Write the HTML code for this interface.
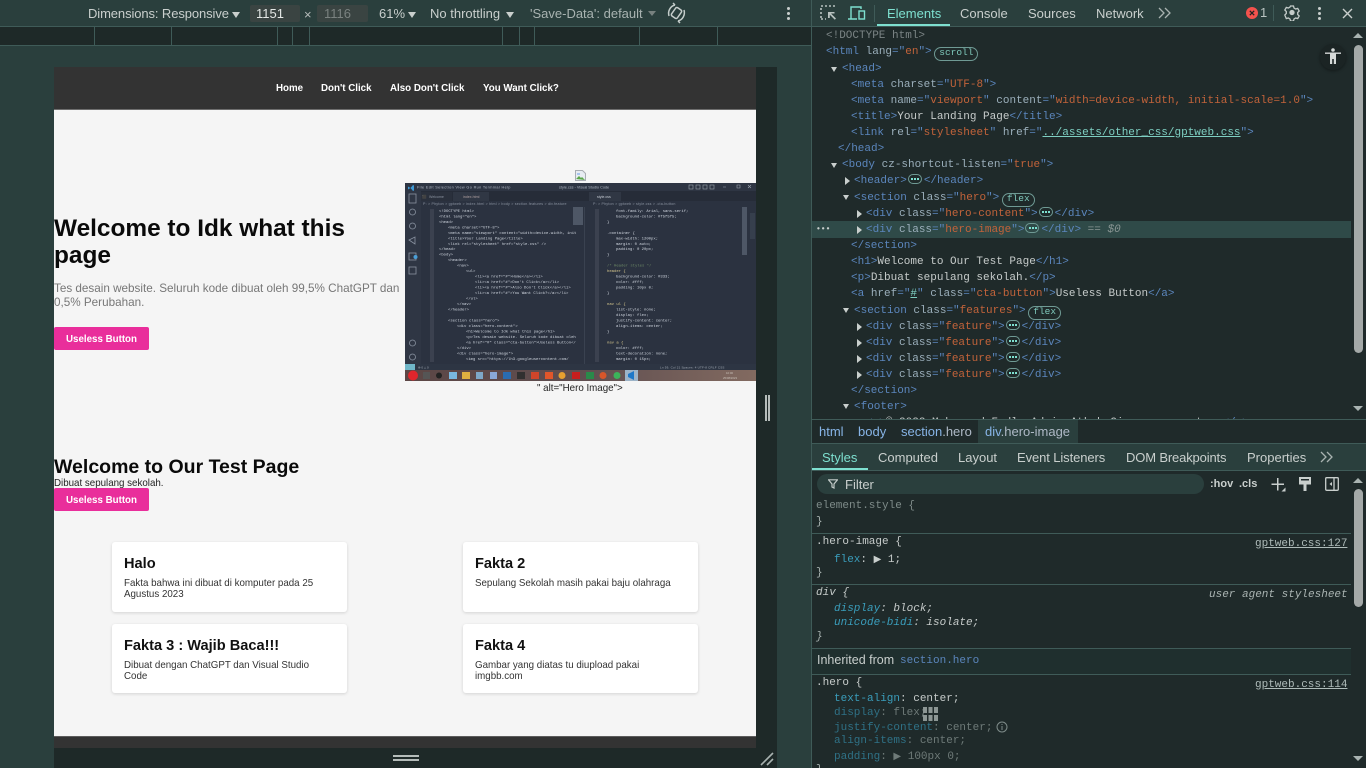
<!DOCTYPE html>
<html lang="en"><head><meta charset="utf-8"><title>DevTools</title>
<style>
*{box-sizing:border-box}
html,body{margin:0;padding:0;width:1366px;height:768px;overflow:hidden;background:#2a3f3d}
body{position:relative}
.a{position:absolute}
.t{position:absolute;white-space:pre;font-family:"Liberation Sans",sans-serif;font-size:13px;line-height:16px;color:#c9cfcd}
.m{position:absolute;white-space:pre;font-family:"Liberation Mono",monospace;font-size:11px;line-height:16px;color:#c6cbca;margin-top:1px}
.m i{font-style:normal}
.g{color:#5b86bd}.n{color:#9bafbb}.v{color:#c2633a}.p{color:#3a9dbb}.u{text-decoration:underline;color:#aebbb9}
.ell{display:inline-block;width:14px;height:10px;border:1px solid #6f9a94;border-radius:5px;vertical-align:-1px;position:relative;margin:0 2px 0 1px}
.ell:after{content:"";position:absolute;left:2.500px;top:3px;width:8px;height:2px;background:repeating-linear-gradient(90deg,#7ee0d0 0 2px,transparent 2px 3px)}
.badge{display:inline-block;border:1px solid #6f9a94;border-radius:8px;height:14px;line-height:10px;font-size:9.500px;color:#7ec8bb;padding:0 4px;vertical-align:-1px;margin-left:-4px;font-family:"Liberation Mono",monospace}
.tr{position:absolute;width:0;height:0;border-left:3.500px solid transparent;border-right:3.500px solid transparent;border-top:5px solid #c9cfcd}
#dom .tr{margin-top:-1px}
.tl{position:absolute;width:0;height:0;border-top:4px solid transparent;border-bottom:4px solid transparent;border-left:5px solid #c9cfcd}
.tick{position:absolute;top:27px;height:18px;width:1px;background:#3f5b58}
.hr{position:absolute;left:812px;width:539px;height:1px;background:#3f5b58}
.card{position:absolute;width:235px;background:#fff;border-radius:3px;box-shadow:0 1px 3px rgba(0,0,0,.14)}
.card b{position:absolute;left:12px;top:13px;font:bold 14.600px/18px "Liberation Sans",sans-serif;color:#111;white-space:pre}
.card span{position:absolute;left:12px;top:36px;width:205px;font:9.760px/11px "Liberation Sans",sans-serif;color:#333}
.btn{position:absolute;left:54px;width:95px;height:23px;background:#e92e9b;border-radius:2px;color:#fff;font:bold 9.760px/25px "Liberation Sans",sans-serif;text-align:center}
</style></head><body>

<!-- left toolbar -->
<div class="a" style="left:0;top:26px;width:811px;height:1px;background:#3f5b58"></div>
<div class="t" style="left:88px;top:6px;letter-spacing:-.1px">Dimensions: Responsive</div>
<div class="tr" style="left:232px;top:12px;border-left-width:4px;border-right-width:4px;border-top-width:6px"></div>
<div class="a" style="left:250px;top:5px;width:50px;height:17px;background:#3a4442;border-radius:2px"></div>
<div class="t" style="left:256px;top:6px;color:#e4e8e6">1151</div>
<div class="t" style="left:304px;top:7px;color:#b5bcba">×</div>
<div class="a" style="left:317px;top:5px;width:51px;height:17px;background:#3a4442;border-radius:2px"></div>
<div class="t" style="left:324px;top:6px;color:#7a8280">1116</div>
<div class="t" style="left:379px;top:6px">61%</div>
<div class="tr" style="left:408px;top:12px;border-left-width:4px;border-right-width:4px;border-top-width:6px"></div>
<div class="t" style="left:430px;top:6px">No throttling</div>
<div class="tr" style="left:506px;top:12px;border-left-width:4px;border-right-width:4px;border-top-width:6px"></div>
<div class="t" style="left:530px;top:6px;color:#a9b3b1">'Save-Data': default</div>
<div class="tr" style="left:648px;top:11px;border-left-width:4px;border-right-width:4px;border-top-width:5px;border-top-color:#77817f"></div>
<svg class="a" style="left:666px;top:2px" width="21" height="22" viewBox="0 0 21 22" fill="none" stroke="#c5cdcb" stroke-width="1.500"><rect x="7" y="6" width="7" height="10" rx="1.500" transform="rotate(35 10.500 11)"/><path d="M3 14C1.500 9 4.500 4 9 3M9 3L7 1M18 8c1.500 5-1.500 10-6 11M12 19l2 2"/></svg>
<svg class="a" style="left:786px;top:6px" width="5" height="15" fill="#c9cfcd"><circle cx="2.500" cy="2.500" r="1.500"/><circle cx="2.500" cy="7.500" r="1.500"/><circle cx="2.500" cy="12.500" r="1.500"/></svg>

<!-- ruler -->
<div class="a" style="left:0;top:27px;width:811px;height:19px;background:#1e2928;border-bottom:1px solid #3f5b58"></div>
<div class="tick" style="left:94px"></div><div class="tick" style="left:171px"></div><div class="tick" style="left:277px"></div><div class="tick" style="left:292px"></div><div class="tick" style="left:309px"></div><div class="tick" style="left:502px"></div><div class="tick" style="left:519px"></div><div class="tick" style="left:534px"></div><div class="tick" style="left:639px"></div><div class="tick" style="left:717px"></div>

<!-- device frame -->
<div class="a" style="left:756px;top:67px;width:21px;height:701px;background:#1e2928"></div>
<div class="a" style="left:54px;top:748px;width:723px;height:20px;background:#1e2928"></div>
<div class="a" style="left:393px;top:755px;width:26px;height:2px;background:#b5bcba"></div>
<div class="a" style="left:393px;top:759px;width:26px;height:2px;background:#b5bcba"></div>
<svg class="a" style="left:760px;top:752px" width="15" height="14" stroke="#a9b3b1" stroke-width="1.600"><path d="M1 13L13 1M7 13L13 7"/></svg>
<div class="a" style="left:765px;top:395px;width:2px;height:26px;background:#b5bcba"></div>
<div class="a" style="left:768px;top:395px;width:2px;height:26px;background:#b5bcba"></div>

<!-- page -->
<div class="a" style="left:54px;top:67px;width:702px;height:681px;background:#f5f5f5"></div>
<div class="a" style="left:54px;top:67px;width:702px;height:43px;background:#333;border-bottom:1px solid #6e6e6e"></div>
<div class="t" style="left:276px;top:81px;font-size:9.760px;font-weight:bold;color:#fff">Home</div>
<div class="t" style="left:321px;top:81px;font-size:9.760px;font-weight:bold;color:#fff">Don't Click</div>
<div class="t" style="left:390px;top:81px;font-size:9.760px;font-weight:bold;color:#fff">Also Don't Click</div>
<div class="t" style="left:483px;top:81px;font-size:9.760px;font-weight:bold;color:#fff">You Want Click?</div>

<div class="t" style="left:54px;top:215px;font-size:24.400px;line-height:27px;font-weight:bold;color:#0a0a0a">Welcome to Idk what this
page</div>
<div class="t" style="left:54px;top:282px;font-size:11.700px;line-height:14px;color:#777">Tes desain website. Seluruh kode dibuat oleh 99,5% ChatGPT dan
0,5% Perubahan.</div>
<div class="btn" style="top:327px">Useless Button</div>

<div class="t" style="left:54px;top:455px;font-size:19.500px;line-height:24px;font-weight:bold;color:#0a0a0a">Welcome to Our Test Page</div>
<div class="t" style="left:54px;top:476px;font-size:9.760px;line-height:16px;color:#222">Dibuat sepulang sekolah.</div>
<div class="btn" style="top:488px">Useless Button</div>

<div class="card" style="left:112px;top:542px;height:70px"><b>Halo</b><span>Fakta bahwa ini dibuat di komputer pada 25 Agustus 2023</span></div>
<div class="card" style="left:463px;top:542px;height:70px"><b>Fakta 2</b><span>Sepulang Sekolah masih pakai baju olahraga</span></div>
<div class="card" style="left:112px;top:624px;height:69px"><b>Fakta 3 : Wajib Baca!!!</b><span>Dibuat dengan ChatGPT dan Visual Studio Code</span></div>
<div class="card" style="left:463px;top:624px;height:69px"><b>Fakta 4</b><span>Gambar yang diatas tu diupload pakai imgbb.com</span></div>

<div class="a" style="left:54px;top:736px;width:702px;height:12px;background:#333;border-top:1px solid #5c5c5c"></div>

<!-- broken image icon -->
<svg class="a" style="left:575px;top:170px" width="11" height="11"><path d="M.5.500h7l3 3v7H.500z" fill="#e8ecf2" stroke="#a9adb3"/><path d="M1 9l3-3 2 2 1-1 3 3z" fill="#5aa64a"/><path d="M2 3h3v2H2z" fill="#a8c4ee"/></svg>
<div class="t" style="left:537px;top:383px;font-size:9.760px;line-height:12px;color:#222">" alt="Hero Image"&gt;</div>

<!-- hero screenshot -->
<svg class="a" style="left:405px;top:183px" width="351" height="198" viewBox="0 0 351 198" font-family="Liberation Mono" font-size="3.900">
<rect width="351" height="198" fill="#2b3240"/>
<rect width="351" height="8" fill="#2e3543"/>
<path d="M1 3.500l2.500 1.500L6 2l1 .500v5L6 8 3.500 5 1 6.500z" fill="#3f9ad6" transform="translate(2)"/>
<g fill="#b4bcc7" font-family="Liberation Sans" font-size="3.800"><text x="12" y="5.500" letter-spacing=".35">File   Edit   Selection   View   Go   Run   Terminal   Help</text><text x="154" y="5.500">style.css - Visual Studio Code</text></g>
<g fill="none" stroke="#9aa2ad" stroke-width=".6"><rect x="284" y="2" width="4" height="4"/><rect x="291" y="2" width="4" height="4"/><rect x="298" y="2" width="4" height="4"/><rect x="305" y="2" width="4" height="4"/><path d="M318 4h3M332 2h3v3h-3zM343 2l3 3M346 2l-3 3"/></g>
<rect y="8" width="16" height="173" fill="#2f3644"/>
<g fill="none" stroke="#8a93a1" stroke-width=".8"><rect x="4" y="11" width="7" height="9"/><circle cx="7.500" cy="29" r="3"/><circle cx="7.500" cy="43" r="3"/><path d="M4 57l6-3v7z"/><rect x="4" y="70" width="7" height="7"/><rect x="4" y="84" width="7" height="7"/><circle cx="7.500" cy="160" r="3"/><circle cx="7.500" cy="174" r="3"/></g>
<circle cx="10.500" cy="74" r="2" fill="#4a9fd8"/>
<rect x="16" y="8" width="335" height="10" fill="#262c38"/>
<rect x="16" y="9" width="31" height="9" fill="#2a303c"/><rect x="48" y="9" width="36" height="9" fill="#303744"/><rect x="184" y="9" width="32" height="9" fill="#303744"/>
<g font-family="Liberation Sans" fill="#8b93a0" font-size="3.600"><text x="17" y="15" fill="#3f9ad6">⬛</text><text x="24" y="15">Welcome</text><text x="58" y="15" fill="#b0a0a0">index.html</text><text x="192" y="15" fill="#c8ced6">style.css</text><text x="18" y="22" letter-spacing=".2">P: &gt; Phyton &gt; gptweb &gt; index.html &gt; html &gt; body &gt; section.features &gt; div.feature</text><text x="188" y="22" letter-spacing=".2">P: &gt; Phyton &gt; gptweb &gt; style.css &gt; .cta-button</text></g>
<rect x="179" y="24" width="1" height="157" fill="#3a4250"/>
<g fill="#cfd5de">
<text x="34" y="29">&lt;!DOCTYPE html&gt;</text><text x="34" y="34.500">&lt;html lang="en"&gt;</text><text x="34" y="40">&lt;head&gt;</text>
<text x="43" y="45.500">&lt;meta charset="UTF-8"&gt;</text><text x="43" y="51">&lt;meta name="viewport" content="width=device-width, init</text><text x="43" y="56.500">&lt;title&gt;Your Landing Page&lt;/title&gt;</text><text x="43" y="62">&lt;link rel="stylesheet" href="style.css" /&gt;</text>
<text x="34" y="67">&lt;/head&gt;</text><text x="34" y="72.500">&lt;body&gt;</text><text x="43" y="78">&lt;header&gt;</text><text x="52" y="83.500">&lt;nav&gt;</text><text x="61" y="89">&lt;ul&gt;</text>
<text x="70" y="94.500">&lt;li&gt;&lt;a href="#"&gt;Home&lt;/a&gt;&lt;/li&gt;</text><text x="70" y="100">&lt;li&gt;&lt;a href="#"&gt;Don't Click&lt;/a&gt;&lt;/li&gt;</text><text x="70" y="105.500">&lt;li&gt;&lt;a href="#"&gt;Also Don't Click&lt;/a&gt;&lt;/li&gt;</text><text x="70" y="111">&lt;li&gt;&lt;a href="#"&gt;You Want Click?&lt;/a&gt;&lt;/li&gt;</text>
<text x="61" y="116.500">&lt;/ul&gt;</text><text x="52" y="122">&lt;/nav&gt;</text><text x="43" y="127.500">&lt;/header&gt;</text>
<text x="43" y="138.500">&lt;section class="hero"&gt;</text><text x="52" y="144">&lt;div class="hero-content"&gt;</text><text x="61" y="149.500">&lt;h1&gt;Welcome to Idk what this page&lt;/h1&gt;</text><text x="61" y="155">&lt;p&gt;Tes desain website. Seluruh kode dibuat oleh</text><text x="61" y="160.500">&lt;a href="#" class="cta-button"&gt;Useless Button&lt;/</text><text x="52" y="166">&lt;/div&gt;</text><text x="52" y="171.500">&lt;div class="hero-image"&gt;</text><text x="61" y="177">&lt;img src="https://lh3.googleusercontent.com/</text>
<text x="211" y="29">font-family: Arial, sans-serif;</text><text x="211" y="34.500">background-color: #f5f5f5;</text><text x="202" y="40">}</text>
<text x="202" y="51">.container {</text><text x="211" y="56.500">max-width: 1200px;</text><text x="211" y="62">margin: 0 auto;</text><text x="211" y="67">padding: 0 20px;</text><text x="202" y="72.500">}</text>
<text x="202" y="83.500" fill="#6d8a66">/* Header styles */</text><text x="202" y="89" fill="#d8c98e">header {</text><text x="211" y="94.500">background-color: #333;</text><text x="211" y="100">color: #fff;</text><text x="211" y="105.500">padding: 10px 0;</text><text x="202" y="111">}</text>
<text x="202" y="122" fill="#d8c98e">nav ul {</text><text x="211" y="127.500">list-style: none;</text><text x="211" y="133">display: flex;</text><text x="211" y="138.500">justify-content: center;</text><text x="211" y="144">align-items: center;</text><text x="202" y="149.500">}</text>
<text x="202" y="160.500" fill="#d8c98e">nav a {</text><text x="211" y="166">color: #fff;</text><text x="211" y="171.500">text-decoration: none;</text><text x="211" y="177">margin: 0 15px;</text>
</g>
<g fill="#5f6875" opacity=".3"><rect x="25" y="26" width="4" height="153"/><rect x="190" y="26" width="4" height="153"/></g>
<g fill="#7a8494" opacity=".45"><rect x="168" y="24" width="10" height="18"/><rect x="337" y="24" width="5" height="48"/></g>
<rect x="345" y="30" width="5" height="26" fill="#363f4d"/>
<rect y="181" width="351" height="6" fill="#2d3543"/><rect y="181" width="10" height="6" fill="#6fb6c8"/>
<g fill="#a4acb7" font-family="Liberation Sans" font-size="3"><text x="13" y="185.500">⊗ 0 △ 0</text><text x="255" y="185.500" letter-spacing=".2">Ln 59, Col 21   Spaces: 4   UTF-8   CRLF   CSS</text></g>
<defs><linearGradient id="tb" x1="0" x2="1" y1="0" y2="0"><stop offset="0" stop-color="#5c4645"/><stop offset=".5" stop-color="#5f4e50"/><stop offset="1" stop-color="#826a60"/></linearGradient></defs>
<rect y="187" width="351" height="11" fill="url(#tb)"/>
<circle cx="8" cy="192.500" r="5" fill="#e0262c"/>
<g><rect x="18" y="189" width="7" height="7" fill="#555"/><circle cx="34" cy="192.500" r="3" fill="#222"/><rect x="44" y="189" width="8" height="7" fill="#79b8e0"/><rect x="57" y="189" width="8" height="7" fill="#e0b040"/><rect x="71" y="189" width="7" height="7" fill="#7ea8c8"/><rect x="85" y="189" width="7" height="7" fill="#8aa8d8"/><rect x="98" y="189" width="8" height="7" fill="#2a6cb0"/><rect x="112" y="189" width="8" height="7" fill="#303030"/><rect x="126" y="189" width="8" height="7" fill="#d0452a"/><rect x="140" y="189" width="8" height="7" fill="#e2562a"/><circle cx="157" cy="192.500" r="3.500" fill="#e8a030"/><rect x="167" y="189" width="8" height="7" fill="#c81e1e"/><rect x="181" y="189" width="8" height="7" fill="#2a8a4a"/><circle cx="198" cy="192.500" r="3.500" fill="#d8562a"/><circle cx="212" cy="192.500" r="3.500" fill="#3cb45a"/><rect x="220" y="187" width="13" height="11" fill="#9db4c8"/><path d="M223 191l6-3v9l-6-3z" fill="#1e78c8"/></g>
<g fill="#c8c0b8" font-family="Liberation Sans" font-size="2.800"><text x="321" y="191">10:00</text><text x="318" y="196">25/08/2023</text></g>
</svg>

<!-- devtools -->
<div class="a" style="left:811px;top:0;width:1px;height:768px;background:#3f5b58"></div>
<div class="a" style="left:812px;top:26px;width:554px;height:394px;background:#1f2a2a"></div>
<div class="a" style="left:812px;top:26px;width:554px;height:1px;background:#3f5b58"></div>
<svg class="a" style="left:820px;top:5px" width="18" height="17" fill="none"><path d="M1 1h2M5 1h2M9 1h2M13 1h2M1 3v2M1 7v2M1 11v2M1 14h2M5 14h1" stroke="#b8c2c0" stroke-width="1.600"/><path d="M8 7h6.500v1.500h-3.500l5 5-1.200 1.200-5-5V13H8z" fill="#b8c2c0"/></svg>
<svg class="a" style="left:848px;top:5px" width="18" height="16" fill="none" stroke="#7ee0d0" stroke-width="1.400"><path d="M3 14V2h10v2M0 14h9"/><rect x="11" y="6" width="5.500" height="8"/></svg>
<div class="a" style="left:874px;top:5px;width:1px;height:17px;background:#3f5b58"></div>
<div class="t" style="left:887px;top:6px;color:#7ee0d0">Elements</div>
<div class="a" style="left:877px;top:24px;width:73px;height:2px;background:#7ee0d0"></div>
<div class="t" style="left:960px;top:6px">Console</div>
<div class="t" style="left:1028px;top:6px">Sources</div>
<div class="t" style="left:1096px;top:6px">Network</div>
<svg class="a" style="left:1158px;top:7px" width="14" height="12" fill="none" stroke="#a9b3b1" stroke-width="1.300"><path d="M1 1l5 5-5 5M7 1l5 5-5 5"/></svg>
<svg class="a" style="left:1246px;top:7px" width="12" height="12"><circle cx="6" cy="6" r="6" fill="#f4524d"/><path d="M3.800 3.800l4.400 4.400M8.200 3.800L3.800 8.200" stroke="#222" stroke-width="1.300"/></svg>
<div class="t" style="left:1260px;top:5px;color:#b9c3c1">1</div>
<div class="a" style="left:1273px;top:5px;width:1px;height:16px;background:#3f5b58"></div>
<svg class="a" style="left:1284px;top:5px" width="16" height="16" fill="none" stroke="#c3cbc9" stroke-width="1.300"><path d="M6.500 1h3l.5 2 1.700 1 2-.6 1.500 2.600-1.500 1.500v2l1.500 1.500-1.500 2.600-2-.6-1.700 1-.5 2h-3l-.5-2-1.700-1-2 .6L.8 10l1.500-1.500v-2L.8 5l1.500-2.600 2 .6L6 2z"/><circle cx="8" cy="7.500" r="2" fill="#c3cbc9"/></svg>
<svg class="a" style="left:1317px;top:6px" width="5" height="15" fill="#c9cfcd"><circle cx="2.500" cy="2.500" r="1.500"/><circle cx="2.500" cy="7.500" r="1.500"/><circle cx="2.500" cy="12.500" r="1.500"/></svg>
<svg class="a" style="left:1342px;top:8px" width="11" height="11" stroke="#c9cfcd" stroke-width="1.400"><path d="M1 1l9 9M10 1l-9 9"/></svg>

<!-- DOM tree -->
<div class="a" style="left:812px;top:221px;width:539px;height:17px;background:#2f4a48"></div>
<div class="a" style="left:812px;top:27px;width:539px;height:392px;overflow:hidden" id="dom">
<div class="m" style="left:14px;top:0;color:#7b8485">&lt;!DOCTYPE html&gt;</div>
<div class="m" style="left:14px;top:16px"><i class="g">&lt;html</i> <i class="n">lang</i><i class="g">="</i><i class="v">en</i><i class="g">"&gt;</i> <span class="badge">scroll</span></div>
<div class="tr" style="left:19px;top:41px"></div>
<div class="m" style="left:30px;top:33px"><i class="g">&lt;head&gt;</i></div>
<div class="m" style="left:39px;top:49px"><i class="g">&lt;meta</i> <i class="n">charset</i><i class="g">="</i><i class="v">UTF-8</i><i class="g">"&gt;</i></div>
<div class="m" style="left:39px;top:65px"><i class="g">&lt;meta</i> <i class="n">name</i><i class="g">="</i><i class="v">viewport</i><i class="g">"</i> <i class="n">content</i><i class="g">="</i><i class="v">width=device-width, initial-scale=1.0</i><i class="g">"&gt;</i></div>
<div class="m" style="left:39px;top:81px"><i class="g">&lt;title&gt;</i>Your Landing Page<i class="g">&lt;/title&gt;</i></div>
<div class="m" style="left:39px;top:97px"><i class="g">&lt;link</i> <i class="n">rel</i><i class="g">="</i><i class="v">stylesheet</i><i class="g">"</i> <i class="n">href</i><i class="g">="</i><i style="color:#7ecfc2;text-decoration:underline">../assets/other_css/gptweb.css</i><i class="g">"&gt;</i></div>
<div class="m" style="left:26px;top:113px"><i class="g">&lt;/head&gt;</i></div>
<div class="tr" style="left:19px;top:137px"></div>
<div class="m" style="left:30px;top:129px"><i class="g">&lt;body</i> <i class="n">cz-shortcut-listen</i><i class="g">="</i><i class="v">true</i><i class="g">"&gt;</i></div>
<div class="tl" style="left:33px;top:150px"></div>
<div class="m" style="left:42px;top:145px"><i class="g">&lt;header&gt;</i><span class="ell"></span><i class="g">&lt;/header&gt;</i></div>
<div class="tr" style="left:31px;top:169px"></div>
<div class="m" style="left:42px;top:162px"><i class="g">&lt;section</i> <i class="n">class</i><i class="g">="</i><i class="v">hero</i><i class="g">"&gt;</i> <span class="badge">flex</span></div>
<div class="tl" style="left:45px;top:183px"></div>
<div class="m" style="left:54px;top:178px"><i class="g">&lt;div</i> <i class="n">class</i><i class="g">="</i><i class="v">hero-content</i><i class="g">"&gt;</i><span class="ell"></span><i class="g">&lt;/div&gt;</i></div>
<div class="tl" style="left:45px;top:199px"></div>
<div class="m" style="left:54px;top:194px"><i class="g">&lt;div</i> <i class="n">class</i><i class="g">="</i><i class="v">hero-image</i><i class="g">"&gt;</i><span class="ell"></span><i class="g">&lt;/div&gt;</i> <i style="color:#8a9694">== <em>$0</em></i></div>
<div class="m" style="left:4px;top:194px;color:#c9cfcd;font-size:8px;font-weight:bold">•••</div>
<div class="m" style="left:39px;top:210px"><i class="g">&lt;/section&gt;</i></div>
<div class="m" style="left:39px;top:226px"><i class="g">&lt;h1&gt;</i>Welcome to Our Test Page<i class="g">&lt;/h1&gt;</i></div>
<div class="m" style="left:39px;top:242px"><i class="g">&lt;p&gt;</i>Dibuat sepulang sekolah.<i class="g">&lt;/p&gt;</i></div>
<div class="m" style="left:39px;top:258px"><i class="g">&lt;a</i> <i class="n">href</i><i class="g">="</i><i style="color:#7ecfc2;text-decoration:underline">#</i><i class="g">"</i> <i class="n">class</i><i class="g">="</i><i class="v">cta-button</i><i class="g">"&gt;</i>Useless Button<i class="g">&lt;/a&gt;</i></div>
<div class="tr" style="left:31px;top:282px"></div>
<div class="m" style="left:42px;top:275px"><i class="g">&lt;section</i> <i class="n">class</i><i class="g">="</i><i class="v">features</i><i class="g">"&gt;</i> <span class="badge">flex</span></div>
<div class="tl" style="left:45px;top:296px"></div>
<div class="m" style="left:54px;top:291px"><i class="g">&lt;div</i> <i class="n">class</i><i class="g">="</i><i class="v">feature</i><i class="g">"&gt;</i><span class="ell"></span><i class="g">&lt;/div&gt;</i></div>
<div class="tl" style="left:45px;top:312px"></div>
<div class="m" style="left:54px;top:307px"><i class="g">&lt;div</i> <i class="n">class</i><i class="g">="</i><i class="v">feature</i><i class="g">"&gt;</i><span class="ell"></span><i class="g">&lt;/div&gt;</i></div>
<div class="tl" style="left:45px;top:328px"></div>
<div class="m" style="left:54px;top:323px"><i class="g">&lt;div</i> <i class="n">class</i><i class="g">="</i><i class="v">feature</i><i class="g">"&gt;</i><span class="ell"></span><i class="g">&lt;/div&gt;</i></div>
<div class="tl" style="left:45px;top:344px"></div>
<div class="m" style="left:54px;top:339px"><i class="g">&lt;div</i> <i class="n">class</i><i class="g">="</i><i class="v">feature</i><i class="g">"&gt;</i><span class="ell"></span><i class="g">&lt;/div&gt;</i></div>
<div class="m" style="left:39px;top:355px"><i class="g">&lt;/section&gt;</i></div>
<div class="tr" style="left:31px;top:378px"></div>
<div class="m" style="left:42px;top:371px"><i class="g">&lt;footer&gt;</i></div>
<div class="m" style="left:54px;top:387px"><i class="g">&lt;p&gt;</i>© 2023 Muhammad Fadly Adnin Athoh Ginanggar ganteng<i class="g">&lt;/p&gt;</i></div>
</div>

<!-- DOM scrollbar -->
<div class="a" style="left:1353px;top:33px;width:0;height:0;border-left:5px solid transparent;border-right:5px solid transparent;border-bottom:5px solid #a9b3b1"></div>
<div class="a" style="left:1354px;top:45px;width:9px;height:308px;background:#a4a9a8;border-radius:5px"></div>
<div class="a" style="left:1353px;top:406px;width:0;height:0;border-left:5px solid transparent;border-right:5px solid transparent;border-top:5px solid #a9b3b1"></div>

<!-- a11y -->
<div class="a" style="left:1320px;top:44px;width:26px;height:26px;border-radius:50%;background:#1b2424;box-shadow:0 1px 3px rgba(0,0,0,.4)"></div>
<svg class="a" style="left:1325px;top:48px" width="16" height="17" fill="#d5d9d8"><circle cx="8" cy="2" r="1.800"/><path d="M0 4.500h16v1.400h-5V16H8.800v-5H7.200v5H5V5.900H0z"/></svg>

<!-- breadcrumb -->
<div class="a" style="left:812px;top:419px;width:554px;height:1px;background:#3f5b58"></div>
<div class="a" style="left:812px;top:420px;width:554px;height:23px;background:#1f2a2a"></div>
<div class="a" style="left:978px;top:420px;width:100px;height:23px;background:#2a3f3d"></div>
<div class="t" style="left:819px;top:424px;color:#87b4e6">html</div>
<div class="t" style="left:858px;top:424px;color:#87b4e6">body</div>
<div class="t" style="left:901px;top:424px;color:#87b4e6">section<i style="font-style:normal;color:#aeb9c6">.hero</i></div>
<div class="t" style="left:985px;top:424px;color:#87b4e6">div<i style="font-style:normal;color:#aeb9c6">.hero-image</i></div>

<!-- styles tabs -->
<div class="a" style="left:812px;top:443px;width:554px;height:28px;background:#2a3f3d;border-top:1px solid #3f5b58;border-bottom:1px solid #3f5b58"></div>
<div class="t" style="left:822px;top:450px;color:#7ee0d0">Styles</div>
<div class="a" style="left:812px;top:468px;width:56px;height:2px;background:#7ee0d0"></div>
<div class="t" style="left:878px;top:450px">Computed</div>
<div class="t" style="left:958px;top:450px">Layout</div>
<div class="t" style="left:1017px;top:450px;letter-spacing:-.1px">Event Listeners</div>
<div class="t" style="left:1126px;top:450px;letter-spacing:-.15px">DOM Breakpoints</div>
<div class="t" style="left:1247px;top:450px">Properties</div>
<svg class="a" style="left:1320px;top:451px" width="14" height="12" fill="none" stroke="#a9b3b1" stroke-width="1.300"><path d="M1 1l5 5-5 5M7 1l5 5-5 5"/></svg>

<!-- filter bar -->
<div class="a" style="left:812px;top:471px;width:554px;height:297px;background:#1f2a2a"></div>
<div class="a" style="left:817px;top:474px;width:387px;height:20px;background:#2a3f3d;border-radius:10px"></div>
<svg class="a" style="left:828px;top:479px" width="10" height="10" fill="none" stroke="#c3cbc9" stroke-width="1.200"><path d="M.5.800h9L6 5v4L4 8V5z"/></svg>
<div class="t" style="left:845px;top:477px">Filter</div>
<div class="t" style="left:1210px;top:476px;font-size:11px;font-weight:bold">:hov</div>
<div class="t" style="left:1239px;top:476px;font-size:11px;font-weight:bold">.cls</div>
<svg class="a" style="left:1270px;top:477px" width="16" height="15" fill="#c9cfcd"><path d="M7 1h1.500v5.500H14V8H8.500v5.500H7V8H1.500V6.500H7z"/><path d="M15.500 10.500v4h-4z"/></svg>
<svg class="a" style="left:1298px;top:476px" width="14" height="17" fill="#c9cfcd"><path d="M1 1h12v7.500H8.500V15h-3V8.500H1z"/><rect x="3" y="3" width="8" height="1.500" fill="#1f2a2a"/></svg>
<svg class="a" style="left:1325px;top:477px" width="14" height="14" fill="none" stroke="#c9cfcd" stroke-width="1.300"><rect x=".7" y=".7" width="12.600" height="12.600" rx="1"/><path d="M9 1v12"/><path d="M7 5v4L4.500 7z" fill="#c9cfcd" stroke="none"/></svg>

<!-- styles pane -->
<div class="m" style="left:816px;top:497px;color:#7e8b89">element.style {</div>
<div class="m" style="left:816px;top:513px;color:#a9b3b1">}</div>
<div class="hr" style="top:533px"></div>
<div class="m" style="left:816px;top:533px">.hero-image {</div>
<div class="m" style="left:1255px;top:535px"><span class="u">gptweb.css:127</span></div>
<div class="m" style="left:834px;top:551px"><i class="p">flex</i>: <span style="color:#c9cfcd;font-size:10px">▶</span> 1;</div>
<div class="m" style="left:816px;top:564px;color:#a9b3b1">}</div>
<div class="hr" style="top:584px"></div>
<div class="m" style="left:816px;top:584px;font-style:italic;color:#c4cac8">div {</div>
<div class="m" style="left:1209px;top:586px;font-style:italic;color:#a9b3b1">user agent stylesheet</div>
<div class="m" style="left:834px;top:600px;font-style:italic"><i class="p" style="font-style:italic">display</i>: block;</div>
<div class="m" style="left:834px;top:614px;font-style:italic"><i class="p" style="font-style:italic">unicode-bidi</i>: isolate;</div>
<div class="m" style="left:816px;top:628px;font-style:italic;color:#a9b3b1">}</div>
<div class="a" style="left:812px;top:648px;width:539px;height:27px;background:#1f2f2e;border-top:1px solid #3f5b58;border-bottom:1px solid #3f5b58"></div>
<div class="t" style="left:817px;top:652px;color:#c9cfcd;font-size:12.500px">Inherited from</div>
<div class="m" style="left:900px;top:652px;color:#5b86bd">section.hero</div>
<div class="m" style="left:816px;top:674px">.hero {</div>
<div class="m" style="left:1255px;top:676px"><span class="u">gptweb.css:114</span></div>
<div class="m" style="left:834px;top:690px"><i class="p">text-align</i>: center;</div>
<div class="m" style="left:834px;top:704px;color:#6e7a78"><i style="color:#2f7186">display</i>: flex;</div>
<svg class="a" style="left:923px;top:707px" width="15" height="14" fill="#8c9694"><rect width="4" height="6"/><rect x="5.500" width="4" height="6"/><rect x="11" width="4" height="6"/><rect y="8" width="4" height="6"/><rect x="5.500" y="8" width="4" height="6"/><rect x="11" y="8" width="4" height="6"/></svg>
<div class="m" style="left:834px;top:719px;color:#6e7a78"><i style="color:#2f7186">justify-content</i>: center;</div>
<svg class="a" style="left:996px;top:721px" width="12" height="12" fill="none" stroke="#7e8b89"><circle cx="6" cy="6" r="5"/><path d="M6 5v4M6 3v1"/></svg>
<div class="m" style="left:834px;top:732px;color:#6e7a78"><i style="color:#2f7186">align-items</i>: center;</div>
<div class="m" style="left:834px;top:748px;color:#6e7a78"><i style="color:#2f7186">padding</i>: <span style="font-size:10px">▶</span> 100px 0;</div>
<div class="m" style="left:816px;top:761px;color:#a9b3b1">}</div>

<!-- styles scrollbar -->
<div class="a" style="left:1353px;top:478px;width:0;height:0;border-left:5px solid transparent;border-right:5px solid transparent;border-bottom:5px solid #a9b3b1"></div>
<div class="a" style="left:1354px;top:489px;width:9px;height:118px;background:#a4a9a8;border-radius:5px"></div>
<div class="a" style="left:1353px;top:756px;width:0;height:0;border-left:5px solid transparent;border-right:5px solid transparent;border-top:5px solid #a9b3b1"></div>
</body></html>
